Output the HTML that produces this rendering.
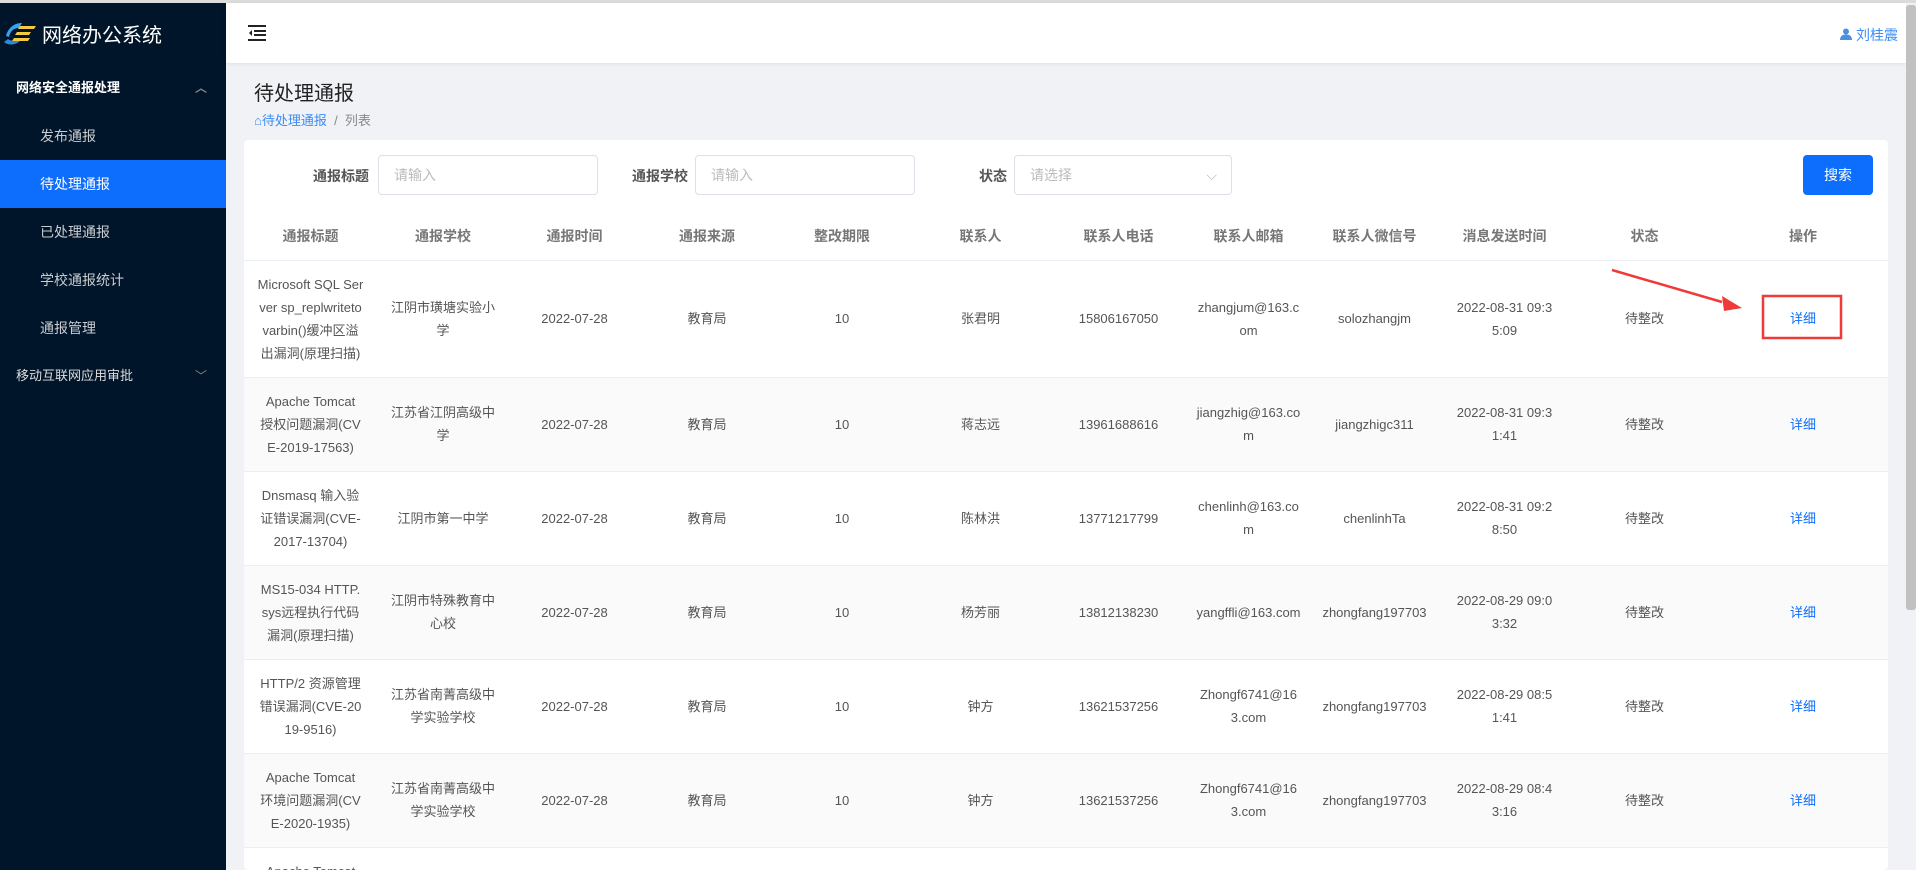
<!DOCTYPE html>
<html><head><meta charset="utf-8"><style>
*{box-sizing:border-box;margin:0;padding:0}
html,body{width:1916px;height:870px;overflow:hidden}
body{background:#f0f2f5;font-family:"Liberation Sans","Noto Sans CJK SC",sans-serif;font-size:14px;color:#606266;position:relative}
.top{position:absolute;left:0;top:0;width:1916px;height:3px;background:#dcdcdc}
.side{position:absolute;left:0;top:3px;width:226px;height:867px;background:#001529}
.logo{height:60px;display:flex;align-items:center;color:#fff;font-size:20px;padding-left:2px}
.mi{position:absolute;left:0;width:226px;height:48px;line-height:48px;color:#fff;font-size:14px}
.sub{padding-left:40px;color:#c9ccd1}
.act{background:#0d6efd;color:#fff}
.hdr{position:absolute;left:226px;top:3px;width:1680px;height:60px;background:#fff;box-shadow:0 1px 4px rgba(0,21,41,.08)}
.title{position:absolute;left:254px;top:77px;font-size:20px;color:#222}
.bc{position:absolute;left:254px;top:110px;font-size:13px;color:#888}
.card{position:absolute;left:244px;top:140px;width:1644px;height:730px;background:#fff;border-radius:4px;overflow:hidden}
.lbl{position:absolute;top:26px;font-size:14px;color:#555;font-weight:bold;text-align:right}
.inp{position:absolute;top:15px;height:40px;border:1px solid #dcdfe6;border-radius:4px;color:#bbb;padding-left:15px;line-height:38px;font-size:14px}
.btn{position:absolute;left:1559px;top:15px;width:70px;height:40px;background:#0d6efd;color:#fff;border-radius:4px;text-align:center;line-height:40px;font-size:14px}
table{position:absolute;left:0;top:72px;border-collapse:collapse;table-layout:fixed;width:1644px}
th{height:48px;font-weight:bold;color:#777;font-size:14px;border-bottom:1px solid #ebeef5;text-align:center}
td{padding:0 2px;height:94px;line-height:23px;text-align:center;border-bottom:1px solid #ebeef5;font-size:13px;color:#555;white-space:nowrap;overflow:hidden}
tr.f td{height:117px}
tr.s td{background:#fafafa}
.lk{color:#0d6efd}
.sb{position:absolute;left:1906px;top:5px;width:10px;height:605px;background:#c1c1c1;border-radius:3px}
</style></head><body>
<div class="top"></div>
<div class="side">
 <div class="logo"><svg width="36" height="30" viewBox="0 0 36 30"><path d="M4 18c2-8 8-13 16-13l-3 5c-6 0-9 4-10 9z" fill="#3aa0f0"/><path d="M2 24c4 4 12 3 16-1l2-3c-4 3-10 4-14 1z" fill="#2a8ad8"/><path d="M18 8h16l-2 3H16zM15 14h14l-2 3H13zM12 20h16l-2 3H10z" fill="#f5c842"/></svg><span style="margin-left:4px">网络办公系统</span></div>
 <div class="mi" style="top:61px;padding-left:16px;font-weight:bold;font-size:13px">网络安全通报处理<span style="position:absolute;left:195px;color:#888;font-size:12px">︿</span></div>
 <div class="mi sub" style="top:109px">发布通报</div>
 <div class="mi sub act" style="top:157px">待处理通报</div>
 <div class="mi sub" style="top:205px">已处理通报</div>
 <div class="mi sub" style="top:253px">学校通报统计</div>
 <div class="mi sub" style="top:301px">通报管理</div>
 <div class="mi" style="top:349px;padding-left:16px;font-size:13px;color:#ddd">移动互联网应用审批<span style="position:absolute;left:195px;color:#888;font-size:12px">﹀</span></div>
</div>
<div class="hdr">
 <svg style="position:absolute;left:22px;top:22px" width="18" height="16" viewBox="0 0 18 16"><path d="M0 1h18M6 6h12M6 10h12M0 15h18" stroke="#222" stroke-width="2"/><path d="M4 5l-3 3 3 3z" fill="#222"/></svg>
 <div style="position:absolute;right:8px;top:22px;color:#3b8cf5;font-size:14px"><svg width="12" height="12" viewBox="0 0 12 12"><circle cx="6" cy="3.5" r="3" fill="#4a90e2"/><path d="M0 12c0-4 2.5-5.5 6-5.5s6 1.5 6 5.5z" fill="#4a90e2"/></svg> 刘桂震</div>
</div>
<div class="title">待处理通报</div>
<div class="bc"><span style="color:#3b8cf5">⌂待处理通报</span> &nbsp;/&nbsp; 列表</div>
<div class="card">
 <div class="lbl" style="left:45px;width:80px">通报标题</div><div class="inp" style="left:134px;width:220px">请输入</div>
 <div class="lbl" style="left:364px;width:80px">通报学校</div><div class="inp" style="left:451px;width:220px">请输入</div>
 <div class="lbl" style="left:683px;width:80px">状态</div><div class="inp" style="left:770px;width:218px">请选择<span style="position:absolute;right:14px;color:#bbb">⌵</span></div>
 <div class="btn">搜索</div>
 <table>
 <colgroup><col style="width:133px"><col style="width:132px"><col style="width:131px"><col style="width:134px"><col style="width:136px"><col style="width:141px"><col style="width:135px"><col style="width:125px"><col style="width:127px"><col style="width:133px"><col style="width:147px"><col style="width:170px"></colgroup>
 <tr><th>通报标题</th><th>通报学校</th><th>通报时间</th><th>通报来源</th><th>整改期限</th><th>联系人</th><th>联系人电话</th><th>联系人邮箱</th><th>联系人微信号</th><th>消息发送时间</th><th>状态</th><th>操作</th></tr>
 <tr class="f"><td>Microsoft SQL Ser<br>ver sp_replwriteto<br>varbin()缓冲区溢<br>出漏洞(原理扫描)</td><td>江阴市璜塘实验小<br>学</td><td>2022-07-28</td><td>教育局</td><td>10</td><td>张君明</td><td>15806167050</td><td>zhangjum@163.c<br>om</td><td>solozhangjm</td><td>2022-08-31 09:3<br>5:09</td><td>待整改</td><td class="lk">详细</td></tr>
 <tr class="s"><td>Apache Tomcat<br>授权问题漏洞(CV<br>E-2019-17563)</td><td>江苏省江阴高级中<br>学</td><td>2022-07-28</td><td>教育局</td><td>10</td><td>蒋志远</td><td>13961688616</td><td>jiangzhig@163.co<br>m</td><td>jiangzhigc311</td><td>2022-08-31 09:3<br>1:41</td><td>待整改</td><td class="lk">详细</td></tr>
 <tr><td>Dnsmasq 输入验<br>证错误漏洞(CVE-<br>2017-13704)</td><td>江阴市第一中学</td><td>2022-07-28</td><td>教育局</td><td>10</td><td>陈林洪</td><td>13771217799</td><td>chenlinh@163.co<br>m</td><td>chenlinhTa</td><td>2022-08-31 09:2<br>8:50</td><td>待整改</td><td class="lk">详细</td></tr>
 <tr class="s"><td>MS15-034 HTTP.<br>sys远程执行代码<br>漏洞(原理扫描)</td><td>江阴市特殊教育中<br>心校</td><td>2022-07-28</td><td>教育局</td><td>10</td><td>杨芳丽</td><td>13812138230</td><td>yangffli@163.com</td><td>zhongfang197703</td><td>2022-08-29 09:0<br>3:32</td><td>待整改</td><td class="lk">详细</td></tr>
 <tr><td>HTTP/2 资源管理<br>错误漏洞(CVE-20<br>19-9516)</td><td>江苏省南菁高级中<br>学实验学校</td><td>2022-07-28</td><td>教育局</td><td>10</td><td>钟方</td><td>13621537256</td><td>Zhongf6741@16<br>3.com</td><td>zhongfang197703</td><td>2022-08-29 08:5<br>1:41</td><td>待整改</td><td class="lk">详细</td></tr>
 <tr class="s"><td>Apache Tomcat<br>环境问题漏洞(CV<br>E-2020-1935)</td><td>江苏省南菁高级中<br>学实验学校</td><td>2022-07-28</td><td>教育局</td><td>10</td><td>钟方</td><td>13621537256</td><td>Zhongf6741@16<br>3.com</td><td>zhongfang197703</td><td>2022-08-29 08:4<br>3:16</td><td>待整改</td><td class="lk">详细</td></tr>
 <tr><td style="vertical-align:top;padding-top:12px">Apache Tomcat</td><td></td><td></td><td></td><td></td><td></td><td></td><td></td><td></td><td></td><td></td><td></td></tr>
 </table>
</div>
<svg style="position:absolute;left:0;top:0" width="1916" height="870"><path d="M1612 270L1722 302" stroke="#f03a3a" stroke-width="2.5"/><path d="M1742 308L1722 296L1724 311z" fill="#f03a3a"/><rect x="1763" y="296" width="78" height="42" fill="none" stroke="#f03a3a" stroke-width="2.5"/></svg>
<div class="sb"></div>
</body></html>
